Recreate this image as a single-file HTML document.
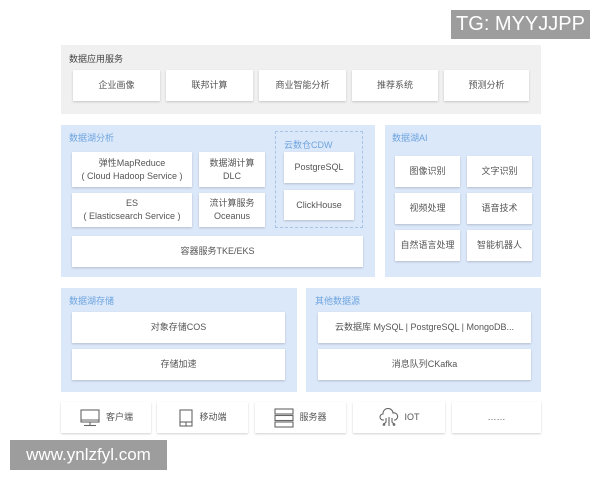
<!DOCTYPE html>
<html><head><meta charset="utf-8"><style>
*{margin:0;padding:0;box-sizing:border-box}
body{width:600px;height:480px;background:#fff;position:relative;overflow:hidden;font-family:"Liberation Sans","Noto Sans CJK SC",sans-serif;color:#444}
.a{position:absolute}
.p{position:absolute;background:#dbe8fa}
.g{background:#f0f0f0}
.t{position:absolute;font-size:9px;color:#6ea4de}
.b{position:absolute;background:#fff;box-shadow:0 1px 2px rgba(0,0,0,.18);display:flex;align-items:center;justify-content:center;text-align:center;font-size:9px;line-height:13px;color:#555}
.wm{position:absolute;background:#9d9d9d;color:#fff;display:flex;align-items:center;justify-content:center}
svg{stroke:#666;fill:none;stroke-width:1.1}
</style></head><body>
<div class="wm" style="left:451px;top:10px;width:139px;height:29px;font-size:20px">TG: MYYJJPP</div>

<div class="p g" style="left:61px;top:45px;width:480px;height:69px"></div>
<div class="a" style="left:69px;top:52px;font-size:9px;color:#444">数据应用服务</div>
<div class="b" style="left:73px;top:70px;width:87px;height:31px">企业画像</div>
<div class="b" style="left:166px;top:70px;width:87px;height:31px">联邦计算</div>
<div class="b" style="left:259px;top:70px;width:87px;height:31px">商业智能分析</div>
<div class="b" style="left:352px;top:70px;width:86px;height:31px">推荐系统</div>
<div class="b" style="left:444px;top:70px;width:85px;height:31px">预测分析</div>

<div class="p" style="left:61px;top:125px;width:314px;height:152px"></div>
<div class="t" style="left:69px;top:131px">数据湖分析</div>
<div class="a" style="left:275px;top:131px;width:88px;height:97px;border:1px dashed #a9c3e6"></div>
<div class="t" style="left:284px;top:138px">云数仓CDW</div>
<div class="b" style="left:72px;top:152px;width:120px;height:35px">弹性MapReduce<br>( Cloud Hadoop Service )</div>
<div class="b" style="left:199px;top:152px;width:66px;height:35px">数据湖计算<br>DLC</div>
<div class="b" style="left:72px;top:193px;width:120px;height:34px">ES<br>( Elasticsearch Service )</div>
<div class="b" style="left:199px;top:193px;width:66px;height:34px">流计算服务<br>Oceanus</div>
<div class="b" style="left:284px;top:152px;width:70px;height:31px">PostgreSQL</div>
<div class="b" style="left:284px;top:190px;width:70px;height:30px">ClickHouse</div>
<div class="b" style="left:72px;top:236px;width:291px;height:31px">容器服务TKE/EKS</div>

<div class="p" style="left:385px;top:125px;width:156px;height:152px"></div>
<div class="t" style="left:392px;top:131px">数据湖AI</div>
<div class="b" style="left:395px;top:156px;width:65px;height:31px">图像识别</div>
<div class="b" style="left:467px;top:156px;width:65px;height:31px">文字识别</div>
<div class="b" style="left:395px;top:193px;width:65px;height:31px">视频处理</div>
<div class="b" style="left:467px;top:193px;width:65px;height:31px">语音技术</div>
<div class="b" style="left:395px;top:230px;width:65px;height:31px">自然语言处理</div>
<div class="b" style="left:467px;top:230px;width:65px;height:31px">智能机器人</div>

<div class="p" style="left:61px;top:288px;width:236px;height:104px"></div>
<div class="t" style="left:69px;top:294px">数据湖存储</div>
<div class="b" style="left:72px;top:312px;width:213px;height:31px">对象存储COS</div>
<div class="b" style="left:72px;top:349px;width:213px;height:31px">存储加速</div>

<div class="p" style="left:306px;top:288px;width:235px;height:104px"></div>
<div class="t" style="left:315px;top:294px">其他数据源</div>
<div class="b" style="left:318px;top:312px;width:213px;height:31px">云数据库 MySQL | PostgreSQL | MongoDB...</div>
<div class="b" style="left:318px;top:349px;width:213px;height:31px">消息队列CKafka</div>

<div class="b" style="left:61px;top:402px;width:90px;height:31px"><svg width="22" height="20" viewBox="0 0 22 20" style="margin-right:5px"><rect x="2" y="2" width="18" height="12"/><line x1="2" y1="12" x2="20" y2="12"/><line x1="11" y1="14" x2="11" y2="17"/><line x1="5" y1="17.5" x2="17" y2="17.5"/></svg>客户端</div>
<div class="b" style="left:157px;top:402px;width:91px;height:31px"><svg width="16" height="20" viewBox="0 0 16 20" style="margin-right:5px"><rect x="2" y="2" width="12" height="16"/><line x1="2" y1="14" x2="14" y2="14"/><line x1="8" y1="14" x2="8" y2="18"/></svg>移动端</div>
<div class="b" style="left:255px;top:402px;width:91px;height:31px"><svg width="20" height="20" viewBox="0 0 20 20" style="margin-right:5px"><rect x="1" y="1" width="18" height="5"/><rect x="1" y="7.5" width="18" height="5"/><rect x="1" y="14" width="18" height="5"/></svg>服务器</div>
<div class="b" style="left:353px;top:402px;width:92px;height:31px"><svg width="20" height="20" viewBox="0 0 20 20" style="margin-right:6px"><path d="M5 12H4a3 3 0 0 1 0-6 5 5 0 0 1 10-1 3.5 3.5 0 0 1 2 7h-1"/><path d="M7 10v4l-2 2M10 9v9M13 10v4l2 2"/><circle cx="5" cy="16.5" r=".8"/><circle cx="15" cy="16.5" r=".8"/></svg>IOT</div>
<div class="b" style="left:452px;top:402px;width:89px;height:31px">……</div>

<div class="wm" style="left:10px;top:440px;width:157px;height:30px;font-size:17px">www.ynlzfyl.com</div>
</body></html>
